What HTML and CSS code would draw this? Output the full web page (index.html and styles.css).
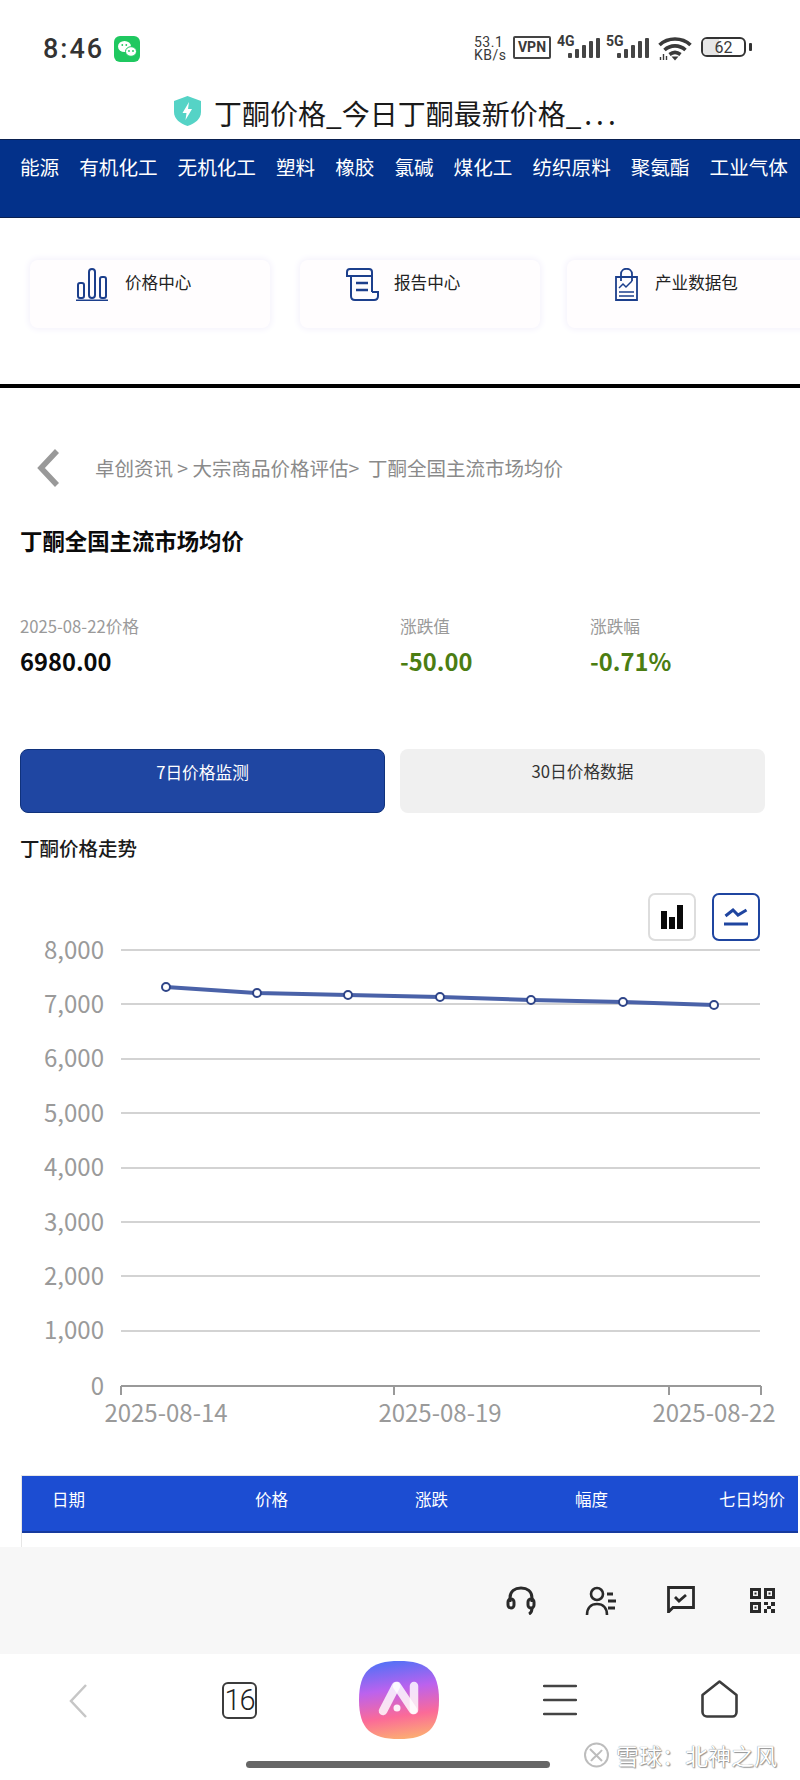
FILE: index.html
```html
<!DOCTYPE html>
<html lang="zh-CN">
<head>
  <meta charset="UTF-8">
  <meta name="viewport" content="width=device-width, initial-scale=1.0">
  <title>丁酮价格</title>
  <link rel="stylesheet" href="styles.css">
</head>
<body>
  <div class="status-bar">
    <div class="status-left">
      <span class="clock">8:46</span>
      <svg class="wechat" width="26" height="26" viewBox="0 0 26 26">
        <rect width="26" height="26" rx="6" fill="#1fc860"/>
        <ellipse cx="10.5" cy="10.5" rx="6.5" ry="5.5" fill="#fff"/>
        <ellipse cx="17" cy="15.5" rx="5.5" ry="4.8" fill="#fff" stroke="#1fc860"/>
        <circle cx="15" cy="15" r=".9" fill="#1fc860"/>
        <circle cx="19" cy="15" r=".9" fill="#1fc860"/>
        <circle cx="8.3" cy="9" r=".9" fill="#1fc860"/>
        <circle cx="12.3" cy="9" r=".9" fill="#1fc860"/>
      </svg>
    </div>
    <div class="status-right">
      <div class="speed"><span>53.1</span><span>KB/s</span></div>
      <span class="vpn">VPN</span>
      <div class="signal">
        <span class="net">4G</span>
        <svg width="32" height="20" viewBox="0 0 32 20" fill="#444">
          <rect x="0" y="15" width="4" height="5" rx="1"/><rect x="7" y="11" width="4" height="9" rx="1"/><rect x="14" y="7" width="4" height="13" rx="1"/><rect x="21" y="3" width="4" height="17" rx="1"/><rect x="28" y="0" width="4" height="20" rx="1"/>
        </svg>
      </div>
      <div class="signal">
        <span class="net">5G</span>
        <svg width="32" height="20" viewBox="0 0 32 20" fill="#444">
          <rect x="0" y="15" width="4" height="5" rx="1"/><rect x="7" y="11" width="4" height="9" rx="1"/><rect x="14" y="7" width="4" height="13" rx="1"/><rect x="21" y="3" width="4" height="17" rx="1"/><rect x="28" y="0" width="4" height="20" rx="1"/>
        </svg>
      </div>
      <svg class="wifi" width="34" height="25" viewBox="0 0 34 25" fill="none" stroke="#3a3a3a" stroke-width="3.6">
        <path d="M1.5 9C10 1 24 1 32.5 9"/>
        <path d="M6.5 14C12.5 8.5 21.5 8.5 27.5 14"/>
        <path d="M11.5 18.5C15 15.8 19 15.8 22.5 18.5"/>
        <path d="M13.5 20.5L17 24.500L20.500 20.5Z" fill="#3a3a3a" stroke="none"/>
        <path d="M2.5 24v-3M5.5 24v-6M8.5 24v-4" stroke-width="1.4"/>
      </svg>
      <div class="battery">
        <div class="battery-body"><span class="battery-fill"></span><span class="battery-num">62</span></div>
        <span class="battery-nub"></span>
      </div>
    </div>
  </div>

  <div class="title-bar">
    <svg width="27" height="30" viewBox="0 0 27 30">
      <path d="M13.5 0L27 5v11c0 7-6 11.500-13.500 14C6 27.500 0 23 0 16V5Z" fill="#55d3c6"/>
      <path d="M15 6L8.500 17h4l-1 7L18 13h-4Z" fill="#fff"/>
    </svg>
    <span class="page-title">丁酮价格_今日丁酮最新价格_<span class="dots">...</span></span>
  </div>

  <nav class="nav-band">
    <a>能源</a><a>有机化工</a><a>无机化工</a><a>塑料</a><a>橡胶</a><a>氯碱</a><a>煤化工</a><a>纺织原料</a><a>聚氨酯</a><a>工业气体</a>
  </nav>

  <div class="card-row">
    <div class="card">
      <svg class="card-icon" width="32" height="33" viewBox="0 0 32 33" fill="none" stroke="#1c3f8c" stroke-width="2">
        <rect x="2" y="15" width="6" height="15" rx="2"/><rect x="13" y="1" width="6" height="29" rx="3"/><rect x="24" y="9" width="6" height="21" rx="2"/>
        <path d="M0 32.500h32"/>
      </svg>
      <span>价格中心</span>
    </div>
    <div class="card">
      <svg class="card-icon" width="33" height="33" viewBox="0 0 33 33" fill="none" stroke="#1c3f8c" stroke-width="2">
        <path d="M26 24V4c0-2-1-3-3-3H4C2 1 1 2 1 4v4h25"/>
        <path d="M5 8v20c0 2.500 1.500 4 4 4h19c2.500 0 4-1.500 4-4v-4h-6"/>
        <path d="M10 15h12M10 22h12" stroke-width="2.400"/>
      </svg>
      <span>报告中心</span>
    </div>
    <div class="card">
      <svg class="card-icon" width="23" height="33" viewBox="0 0 23 33" fill="none" stroke="#1c3f8c" stroke-width="1.800">
        <path d="M1 9h21v23H1Z"/><path d="M6 13V6c0-7 11-7 11 0v7"/>
        <path d="M4 20l4-4 3 3 6-6" stroke-width="1.500"/><path d="M4 24h15M4 28h15" stroke-width="1.500"/>
      </svg>
      <span>产业数据包</span>
    </div>
  </div>

  <div class="crumb-row">
    <svg width="22" height="38" viewBox="0 0 22 38" fill="none" stroke="#999" stroke-width="5.500"><path d="M20 2L4 19L20 36"/></svg>
    <span class="crumbs">卓创资讯 &gt; 大宗商品价格评估&gt;&nbsp; 丁酮全国主流市场均价</span>
  </div>

  <h1 class="main-title">丁酮全国主流市场均价</h1>

  <div class="stats">
    <div class="stat stat-price">
      <span class="stat-label">2025-08-22价格</span>
      <span class="stat-value">6980.00</span>
    </div>
    <div class="stat stat-diff">
      <span class="stat-label">涨跌值</span>
      <span class="stat-value down">-50.00</span>
    </div>
    <div class="stat">
      <span class="stat-label">涨跌幅</span>
      <span class="stat-value down">-0.71%</span>
    </div>
  </div>

  <div class="tabs">
    <div class="tab active">7日价格监测</div>
    <div class="tab">30日价格数据</div>
  </div>

  <h2 class="trend-title">丁酮价格走势</h2>

  <div class="chart-tools">
    <div class="tool-btn">
      <svg width="22" height="24" viewBox="0 0 22 24" fill="#0a0a0a"><rect x="0" y="6" width="6" height="18"/><rect x="8" y="12" width="6" height="12"/><rect x="16" y="0" width="6" height="24"/></svg>
    </div>
    <div class="tool-btn on">
      <svg width="24" height="18" viewBox="0 0 24 18" fill="none" stroke="#1f45a0" stroke-width="3"><path d="M1.500 8L9 2l5 5 8.500-5"/><path d="M0 16h24"/></svg>
    </div>
  </div>

  <svg class="chart" width="800" height="470" viewBox="0 0 800 470">
    <g stroke="#c4c4c4" stroke-width="1.500">
      <path d="M121 5H760"/><path d="M121 59H760"/><path d="M121 114H760"/><path d="M121 168H760"/>
      <path d="M121 223H760"/><path d="M121 277H760"/><path d="M121 331H760"/><path d="M121 386H760" />
    </g>
    <g class="axis-text" text-anchor="end">
      <text x="104" y="14">8,000</text><text x="104" y="68">7,000</text><text x="104" y="122">6,000</text><text x="104" y="177">5,000</text>
      <text x="104" y="231">4,000</text><text x="104" y="286">3,000</text><text x="104" y="340">2,000</text><text x="104" y="394">1,000</text><text x="104" y="450">0</text>
    </g>
    <path d="M121 441H761M121 441v9M394 441v9M669 441v9M761 441v9" fill="none" stroke="#999" stroke-width="2"/>
    <g class="axis-text" text-anchor="middle">
      <text x="166" y="477">2025-08-14</text><text x="440" y="477">2025-08-19</text><text x="714" y="477">2025-08-22</text>
    </g>
    <polyline points="166,42 257,48 348,50 440,52 531,55 623,57 714,60" fill="none" stroke="#4a62a8" stroke-width="4"/>
    <g fill="#fff" stroke="#2f4588" stroke-width="2">
      <circle cx="166" cy="42" r="4"/><circle cx="257" cy="48" r="4"/><circle cx="348" cy="50" r="4"/><circle cx="440" cy="52" r="4"/><circle cx="531" cy="55" r="4"/><circle cx="623" cy="57" r="4"/><circle cx="714" cy="60" r="4"/>
    </g>
  </svg>

  <div class="table-wrap">
    <div class="table-head">
      <span class="col-date">日期</span><span class="col-price">价格</span><span class="col-diff">涨跌</span><span class="col-rate">幅度</span><span class="col-avg">七日均价</span>
    </div>
  </div>

  <div class="tool-strip">
    <svg width="30" height="29" viewBox="0 0 30 29" fill="none" stroke="#2a2a2a" stroke-width="3">
      <path d="M4 16V12C4 5 9 2 15 2s11 3 11 10v4"/>
      <rect x="2" y="13" width="6" height="9" rx="3"/><rect x="22" y="13" width="6" height="9" rx="3"/>
      <path d="M26 22c0 3-1 5-3 6"/>
    </svg>
    <svg width="32" height="30" viewBox="0 0 32 30" fill="none" stroke="#2a2a2a" stroke-width="2.600">
      <circle cx="12" cy="8" r="6"/><path d="M2 29c0-7 4-11 10-11s10 4 10 11"/>
      <path d="M22 8h6M23 15h8M23 22h7" stroke-width="3"/>
    </svg>
    <svg width="28" height="27" viewBox="0 0 28 27" fill="none" stroke="#2a2a2a" stroke-width="2.800">
      <path d="M1.500 26V1.500h25v20H6Z"/><path d="M8 11l4 4 7-6"/>
    </svg>
    <svg width="26" height="25" viewBox="0 0 26 25" fill="#2a2a2a">
      <path fill-rule="evenodd" d="M0 0h11v11H0ZM3 3v5h5V3ZM14 0h11v11H14ZM17 3v5h5V3ZM0 14h11v11H0ZM3 17v5h5v-5Z"/>
      <rect x="4.500" y="4.500" width="2" height="2"/><rect x="18.500" y="4.500" width="2" height="2"/><rect x="4.500" y="18.500" width="2" height="2"/>
      <path d="M14 14h4v3h-4ZM21 14h4v4h-4ZM17 18h4v3h-4ZM14 21h3v4h-3ZM21 21h4v4h-4Z"/>
    </svg>
  </div>

  <div class="bottom-bar">
    <svg class="nav-back" width="18" height="34" viewBox="0 0 18 34" fill="none" stroke="#c6c6c6" stroke-width="2.500"><path d="M17 1L2 17l15 16"/></svg>
    <div class="tab-count">16</div>
    <svg class="logo" width="80" height="78" viewBox="0 0 80 78">
      <defs>
        <linearGradient id="logoGrad" x1=".45" y1="0" x2=".6" y2="1">
          <stop offset="0" stop-color="#5670f6"/>
          <stop offset=".35" stop-color="#bb62ee"/>
          <stop offset=".7" stop-color="#fb6a98"/>
          <stop offset="1" stop-color="#fcae72"/>
        </linearGradient>
      </defs>
      <path d="M40 0C68 0 80 10 80 39S68 78 40 78 0 68 0 39 12 0 40 0Z" fill="url(#logoGrad)"/>
      <g fill="none" stroke="#fff" stroke-opacity=".82" stroke-width="8.500" stroke-linecap="round">
        <path d="M24 50L37 25"/><path d="M38 25L54 49"/><path d="M55 25V49"/>
      </g>
      <circle cx="38" cy="47" r="3.500" fill="#fff" fill-opacity=".9"/>
    </svg>
    <svg class="menu-icon" width="34" height="32" viewBox="0 0 34 32" fill="none" stroke="#444" stroke-width="2.500" stroke-linecap="round"><path d="M1 2h32M1 16h32M1 30h32"/></svg>
    <svg class="home-icon" width="37" height="38" viewBox="0 0 37 38" fill="none" stroke="#3c3c3c" stroke-width="2.600"><path d="M18.500 1.500L35.500 15V32c0 3-2 4.500-4 4.500H6c-2 0-4.500-1.500-4.500-4.500V15Z" stroke-linejoin="round"/></svg>
    <div class="gesture-line"></div>
    <div class="watermark">
      <svg width="27" height="26" viewBox="0 0 27 26" fill="none" stroke="#bdbdbd" stroke-width="2"><circle cx="13.500" cy="13" r="11.500"/><path d="M7 7l12 12M19 8C16 12 12 14 8 19"/></svg>
      <span>雪球：北神之风</span>
    </div>
  </div>
</body>
</html>
```

FILE: styles.css
```css
* {
  box-sizing: border-box;
}
html, body {
  margin: 0;
  padding: 0;
}
body {
  width: 800px;
  height: 1780px;
  overflow: hidden;
  background-color: #fff;
  color: #111;
  font-family: "Noto Sans CJK SC", "Noto Sans", sans-serif;
}
svg {
  display: block;
  flex: none;
}

/* phone status bar */
.status-bar {
  height: 78px;
  padding: 33px 48px 0 43px;
  display: flex;
  justify-content: space-between;
  align-items: flex-start;
  color: #3a3a3a;
}
.status-left {
  display: flex;
  align-items: center;
  gap: 10px;
  height: 28px;
  margin-top: 2px;
}
.clock {
  font-family: Roboto, sans-serif;
  font-size: 27px;
  font-weight: 500;
  letter-spacing: 2px;
  color: #333;
}
.status-right {
  display: flex;
  align-items: flex-start;
  margin-top: 3px;
}
.speed {
  width: 32px;
  margin: 0 7px 0 0;
  display: flex;
  flex-direction: column;
  font-family: Roboto, sans-serif;
  font-size: 14px;
  line-height: 12.500px;
  letter-spacing: .5px;
}
.vpn {
  width: 38px;
  height: 23px;
  border: 2.500px solid #444;
  border-radius: 2px;
  font-family: Roboto, sans-serif;
  font-size: 14px;
  font-weight: 700;
  line-height: 18px;
  text-align: center;
}
.signal {
  position: relative;
  width: 32px;
  height: 22px;
  margin-left: 17px;
  padding-top: 2px;
}
.net {
  position: absolute;
  top: -1px;
  left: -11px;
  font-family: Roboto, sans-serif;
  font-size: 14px;
  font-weight: 700;
  line-height: 13px;
}
.wifi {
  margin: 0 0 0 9px;
}
.battery {
  display: flex;
  align-items: center;
  height: 20px;
  margin: 1px 0 0 9px;
  gap: 3px;
}
.battery-body {
  position: relative;
  width: 45px;
  height: 20px;
  border: 2px solid #333;
  border-radius: 6px;
  overflow: hidden;
}
.battery-fill {
  position: absolute;
  left: 0;
  top: 0;
  bottom: 0;
  width: 40%;
  background-color: #e6e6e6;
}
.battery-num {
  position: relative;
  display: block;
  font-family: Roboto, sans-serif;
  font-size: 16px;
  line-height: 17px;
  text-align: center;
}
.battery-nub {
  width: 3px;
  height: 8px;
  background-color: #333;
  border-radius: 1px;
}

/* browser title */
.title-bar {
  height: 61px;
  padding: 18px 0 0 174px;
  display: flex;
  gap: 13px;
}
.page-title {
  margin-top: -2px;
  font-size: 28px;
  line-height: 38px;
  color: #1a1a1a;
}
.dots {
  letter-spacing: 4px;
  margin-left: 3px;
}

.nav-band {
  height: 79px;
  padding: 12px 12px 0 20px;
  display: flex;
  justify-content: space-between;
  background-color: #03318a;
  border-top: 1px solid #0a2050;
  border-bottom: 1px solid #0a2050;
}
.nav-band a {
  color: #fff;
  font-size: 19.600px;
  line-height: 30px;
}

.card-row {
  height: 166px;
  padding: 42px 0 0 30px;
  display: flex;
  gap: 30px;
  overflow: hidden;
}
.card {
  flex: none;
  width: 240px;
  height: 68px;
  padding: 7px 0 0 46px;
  display: flex;
  gap: 17px;
  font-size: 16.600px;
  line-height: 30px;
  border-radius: 8px;
  background-color: #fffdfe;
  box-shadow: 0 0 6px 2px #f5f3fc;
}
.card span {
  color: #222;
}
.card-icon {
  margin-top: 1px;
}
.card:nth-child(2) {
  padding-left: 46px;
  gap: 15px;
}
.card:nth-child(3) {
  width: 270px;
  margin-left: -3px;
  padding-left: 48px;
  gap: 17px;
}

.crumb-row {
  height: 140px;
  border-top: 4px solid #000;
  padding: 61px 0 0 37px;
  display: flex;
  align-items: flex-start;
  gap: 36px;
}
.crumbs {
  color: #8a8a8a;
  font-size: 19.500px;
  line-height: 38px;
  white-space: nowrap;
}

.main-title {
  margin: 0 0 0 20px;
  font-size: 22.400px;
  line-height: 32px;
  font-weight: 700;
  color: #0b0b0b;
}

.stats {
  margin-top: 58px;
  padding-left: 20px;
  display: flex;
}
.stat {
  display: flex;
  flex-direction: column;
}
.stat-price {
  width: 380px;
}
.stat-diff {
  width: 190px;
}
.stat-label {
  font-size: 16.700px;
  line-height: 24px;
  color: #9a9a9a;
}
.stat-value {
  margin-top: 5px;
  font-size: 23.700px;
  line-height: 36px;
  font-weight: 700;
  color: #0b0b0b;
}
.stat-value.down {
  color: #4b7d12;
}

.tabs {
  margin-top: 70px;
  padding-left: 20px;
  display: flex;
  gap: 15px;
}
.tab {
  width: 365px;
  height: 64px;
  padding-top: 10px;
  border-radius: 8px;
  background-color: #f0f0f0;
  color: #333;
  font-size: 16.700px;
  line-height: 24px;
  text-align: center;
}
.tab.active {
  background-color: #1f46a2;
  border: 1px solid #10327c;
  color: #fff;
}

.trend-title {
  margin: 20px 0 0 20px;
  font-size: 19.500px;
  line-height: 30px;
  font-weight: 500;
  color: #1a1a1a;
}

.chart-tools {
  margin-top: 30px;
  padding-right: 40px;
  display: flex;
  justify-content: flex-end;
  gap: 16px;
}
.tool-btn {
  width: 48px;
  height: 48px;
  display: flex;
  align-items: center;
  justify-content: center;
  border: 2px solid #ddd;
  border-radius: 7px;
}
.tool-btn.on {
  border-color: #1f45a0;
}

.chart {
  margin-top: 4px;
  overflow: visible;
}
.axis-text {
  fill: #9a9a9a;
  font-family: "Noto Sans CJK SC", sans-serif;
  font-size: 24px;
}

.table-wrap {
  margin: 60px 0 0 21px;
  height: 72px;
  border-left: 1px solid #e6e6e6;
  border-top: 1px solid #e6e6e6;
}
.table-head {
  position: relative;
  width: 776px;
  height: 57px;
  background-color: #1c4dd2;
  border-bottom: 2px solid #163a9e;
  color: #fff;
  font-size: 16.500px;
  line-height: 46px;
}
.table-head span {
  position: absolute;
  top: 0;
}
.col-date { left: 30px; }
.col-price { left: 233px; }
.col-diff { left: 393px; }
.col-rate { left: 553px; }
.col-avg { left: 697px; }

.tool-strip {
  height: 107px;
  padding: 39px 0 0 506px;
  display: flex;
  align-items: flex-start;
  background-color: #f7f7f7;
}
.tool-strip svg:nth-child(2) {
  margin-left: 49px;
}
.tool-strip svg:nth-child(3) {
  margin-left: 50px;
}
.tool-strip svg:nth-child(4) {
  margin-left: 55px;
  margin-top: 2px;
}

.bottom-bar {
  position: relative;
  height: 125px;
  padding: 7px 62px 0 69px;
  display: flex;
  justify-content: space-between;
  align-items: flex-start;
}
.nav-back {
  margin-top: 23px;
}
.tab-count {
  width: 35px;
  height: 37px;
  margin: 21px 0 0 135px;
  border: 2.500px solid #3c3c3c;
  border-radius: 6px;
  font-family: Roboto, sans-serif;
  font-size: 29px;
  font-weight: 300;
  line-height: 32px;
  text-align: center;
  letter-spacing: -1px;
  color: #222;
}
.logo {
  margin-left: 102px;
}
.menu-icon {
  margin: 23px 0 0 104px;
}
.home-icon {
  margin: 19px 0 0 124px;
}
.gesture-line {
  position: absolute;
  left: 246px;
  top: 107px;
  width: 304px;
  height: 7px;
  border-radius: 4px;
  background-color: #666;
}
.watermark {
  position: absolute;
  left: 583px;
  top: 88px;
  display: flex;
  align-items: center;
  gap: 6px;
  color: #fff;
  font-size: 23px;
  line-height: 26px;
  white-space: nowrap;
  text-shadow: 0 0 1px #666, 1px 1px 1px #999;
}
```
